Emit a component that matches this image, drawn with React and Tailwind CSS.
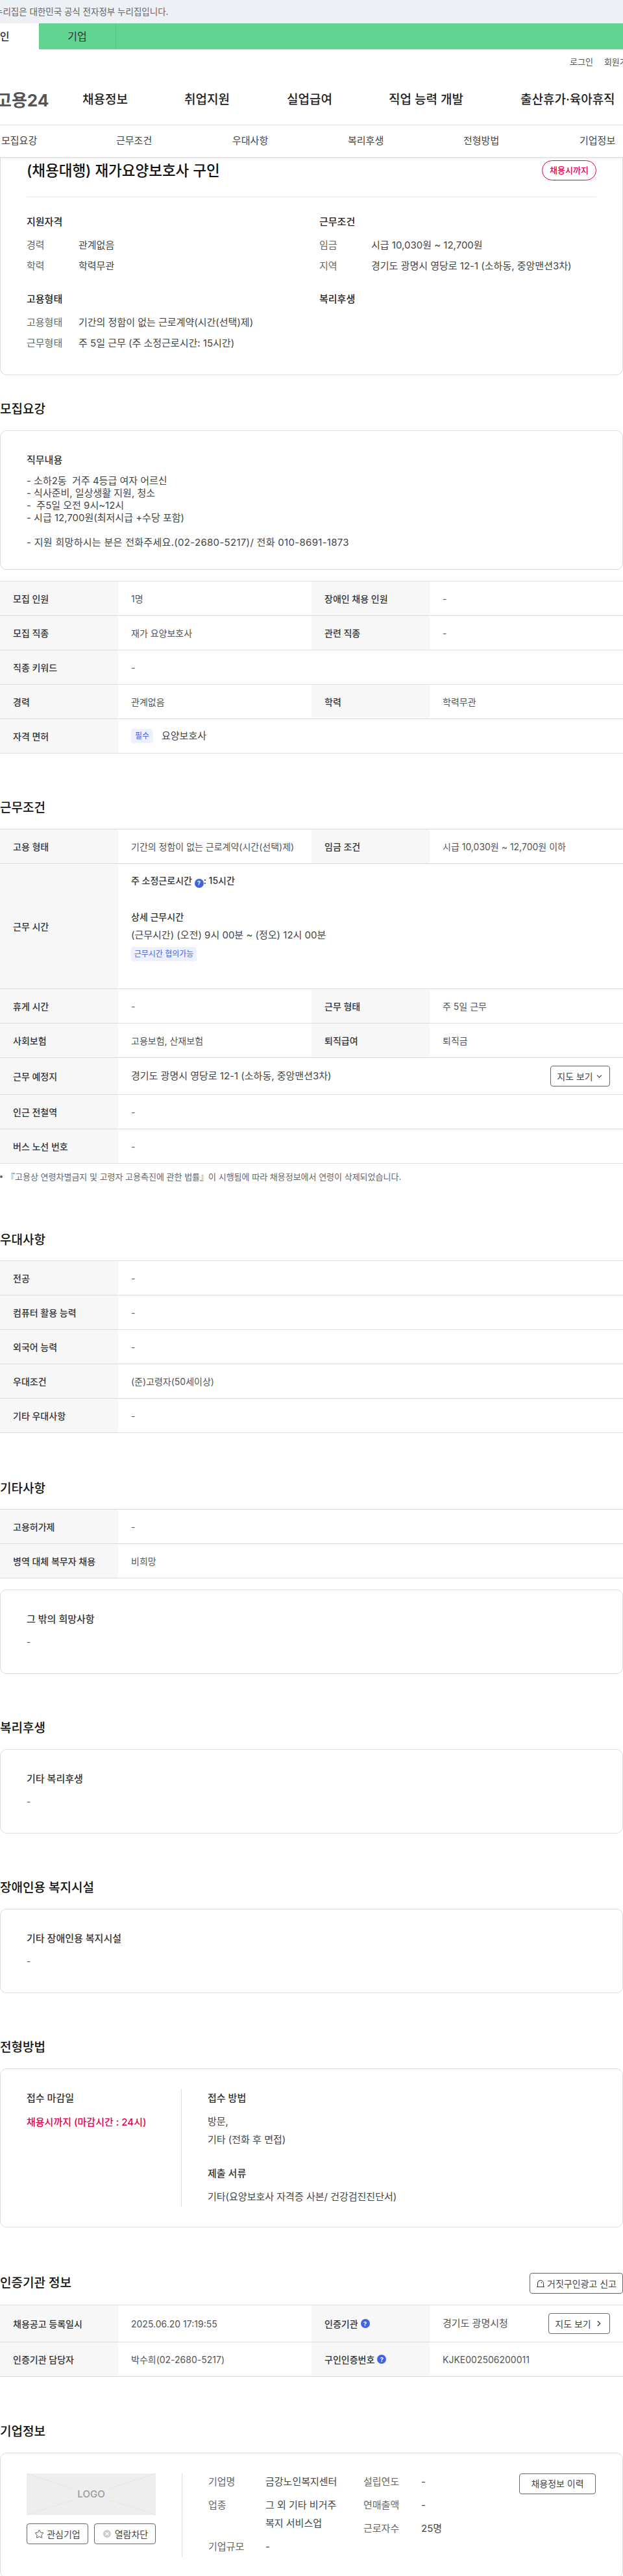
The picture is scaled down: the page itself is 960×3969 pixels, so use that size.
import { ChevronDown, ChevronRight, Star, CircleX } from "lucide-react";

const font = "font-['Inter','Noto_Sans_CJK_KR',sans-serif]";

function Help() {
  return (
    <span className="inline-flex h-[14px] w-[14px] items-center justify-center rounded-full bg-[#4263e0] align-[-2px] text-[9px] font-bold leading-none text-white">
      ?
    </span>
  );
}

function Heading({ children, className = "" }) {
  return <h2 className={`h-[28px] text-[19px] font-medium leading-[28px] text-[#111] ${className}`}>{children}</h2>;
}

function Label({ children }) {
  return (
    <div className="flex w-[182px] shrink-0 items-center bg-[#f7f7f7] pl-[20px] text-[14px] font-medium text-[#333]">
      {children}
    </div>
  );
}

function Value({ children, className = "" }) {
  return <div className={`flex min-w-0 flex-1 items-center pl-[20px] text-[14px] text-[#555] ${className}`}>{children}</div>;
}

// rows: [label, value, label2?, value2?, heightClass?]
function Table({ rows }) {
  return (
    <div className="border-t border-[#ddd]">
      {rows.map((r, i) => (
        <div key={i} className={`flex border-b border-[#ddd] ${r[4] || "h-[53px]"}`}>
          <Label>{r[0]}</Label>
          <Value className={r[2] ? "max-w-[298px]" : ""}>{r[1]}</Value>
          {r[2] && <Label>{r[2]}</Label>}
          {r[2] && <Value>{r[3]}</Value>}
        </div>
      ))}
    </div>
  );
}

function NoteCard({ title, className = "" }) {
  return (
    <div className={`h-[130px] rounded-[10px] border border-[#ddd] px-[40px] pt-[35px] ${className}`}>
      <div className="text-[15px] font-medium leading-[20px] text-[#333]">{title}</div>
      <div className="mt-[15px] text-[14px] leading-[20px] text-[#555]">-</div>
    </div>
  );
}

function Info({ label, children }) {
  return (
    <div className="flex h-[20px] items-center text-[15px] leading-[20px]">
      <span className="w-[80px] shrink-0 text-[#666]">{label}</span>
      <span className="whitespace-nowrap text-[#444]">{children}</span>
    </div>
  );
}

function Summary() {
  return (
    <div className="h-[336px] rounded-b-[10px] border border-t-0 border-[#ddd] px-[40px] pt-[5px]">
      <div className="flex h-[31px] items-center justify-between">
        <h1 className="text-[22.5px] font-medium leading-[31px] text-[#111]">(채용대행) 재가요양보호사 구인</h1>
        <span className="flex h-[31px] w-[84px] items-center justify-center rounded-full border border-[#e6004d] text-[13px] font-medium text-[#e6004d]">
          채용시까지
        </span>
      </div>
      <div className="mt-[25px] border-t border-[#e5e5e5]" />
      <div className="mt-[28px] grid grid-cols-[451px_1fr]">
        <div>
          <div className="text-[15px] font-medium leading-[20px] text-[#222]">지원자격</div>
          <div className="mt-[16px] flex flex-col gap-[12px]">
            <Info label="경력">관계없음</Info>
            <Info label="학력">학력무관</Info>
          </div>
        </div>
        <div>
          <div className="text-[15px] font-medium leading-[20px] text-[#222]">근무조건</div>
          <div className="mt-[16px] flex flex-col gap-[12px]">
            <Info label="임금">시급 10,030원 ~ 12,700원</Info>
            <Info label="지역">경기도 광명시 영당로 12-1 (소하동, 중앙맨션3차)</Info>
          </div>
        </div>
        <div className="mt-[31px]">
          <div className="text-[15px] font-medium leading-[20px] text-[#222]">고용형태</div>
          <div className="mt-[16px] flex flex-col gap-[12px]">
            <Info label="고용형태">기간의 정함이 없는 근로계약(시간(선택)제)</Info>
            <Info label="근무형태">주 5일 근무 (주 소정근로시간: 15시간)</Info>
          </div>
        </div>
        <div className="mt-[31px]">
          <div className="text-[15px] font-medium leading-[20px] text-[#222]">복리후생</div>
        </div>
      </div>
    </div>
  );
}

function Header() {
  return (
    <>
      <div className="flex h-[36px] items-center overflow-hidden bg-[#edf0f5] text-[13.5px] text-[#666]">
        <span className="-ml-[8px] whitespace-nowrap">누리집은 대한민국 공식 전자정부 누리집입니다.</span>
      </div>
      <div className="flex h-[40px] bg-[#62d492] text-[16px] text-[#333]">
        <div className="flex w-[60px] items-center overflow-hidden bg-white">
          <span className="-ml-[15px] whitespace-nowrap font-medium">개인</span>
        </div>
        <div className="flex w-[119px] items-center justify-center border-r border-[#57c585]">기업</div>
      </div>
      <div className="flex h-[40px] items-center gap-[17px] pl-[878px] text-[13px] whitespace-nowrap text-[#555]">
        <span>로그인</span>
        <span>회원가입</span>
      </div>
      <div className="flex h-[77px] items-center border-b border-[#e5e5e5] text-[19px] font-medium whitespace-nowrap text-[#222]">
        <span className="-ml-[6px] w-[133px] text-[26px] font-bold text-[#555]">고용24</span>
        <span className="w-[157px]">채용정보</span>
        <span className="w-[158px]">취업지원</span>
        <span className="w-[157px]">실업급여</span>
        <span className="w-[203px]">직업 능력 개발</span>
        <span>출산휴가·육아휴직</span>
      </div>
      <div className="relative z-10 flex h-[49px] items-center pl-[2px] text-[15px] whitespace-nowrap text-[#444] shadow-[0_1px_3px_rgba(0,0,0,0.2)]">
        <span className="w-[177px]">모집요강</span>
        <span className="w-[179px]">근무조건</span>
        <span className="w-[178px]">우대사항</span>
        <span className="w-[178px]">복리후생</span>
        <span className="w-[179px]">전형방법</span>
        <span>기업정보</span>
      </div>
    </>
  );
}

function Recruit() {
  return (
    <section className="pt-[39px]">
      <Heading className="mb-[18px]">모집요강</Heading>
      <div className="h-[215px] rounded-[10px] border border-[#ddd] px-[40px] pt-[35px]">
        <div className="text-[15px] font-medium leading-[20px] text-[#333]">직무내용</div>
        <div className="mt-[12px] text-[15px] leading-[19px] whitespace-pre text-[#444]">
          {"- 소하2동  거주 4등급 여자 어르신\n- 식사준비, 일상생활 지원, 청소\n-  주5일 오전 9시~12시\n- 시급 12,700원(최저시급 +수당 포함)\n\n"}
          <span className="tracking-[0.3px]">- 지원 희망하시는 분은 전화주세요.(02-2680-5217)/ 전화 010-8691-1873</span>
        </div>
      </div>
      <div className="mt-[17px]">
        <Table
          rows={[
            ["모집 인원", "1명", "장애인 채용 인원", "-"],
            ["모집 직종", "재가 요양보호사", "관련 직종", "-"],
            ["직종 키워드", "-"],
            ["경력", "관계없음", "학력", "학력무관"],
            [
              "자격 면허",
              <>
                <span className="mr-[13px] flex h-[22px] w-[34px] items-center justify-center rounded-[4px] bg-[#eef1fd] text-[12px] text-[#4263e0]">
                  필수
                </span>
                <span className="text-[15px] text-[#444]">요양보호사</span>
              </>,
            ],
          ]}
        />
      </div>
    </section>
  );
}

function WorkHours() {
  return (
    <div className="self-start pt-[16px]">
      <div className="text-[14px] font-medium leading-[20px] text-[#333]">
        주 소정근로시간 <Help />: 15시간
      </div>
      <div className="mt-[35px] text-[14px] font-medium leading-[20px] text-[#333]">상세 근무시간</div>
      <div className="mt-[8px] text-[15px] leading-[20px] text-[#444]">(근무시간) (오전) 9시 00분 ~ (정오) 12시 00분</div>
      <div className="mt-[8px] inline-flex h-[22px] w-[101px] items-center justify-center rounded-[4px] bg-[#eef1fd] text-[12px] whitespace-nowrap text-[#4263e0]">
        근무시간 협의가능
      </div>
    </div>
  );
}

function Conditions() {
  return (
    <section className="pt-[70px]">
      <Heading className="mb-[18px]">근무조건</Heading>
      <Table
        rows={[
          ["고용 형태", "기간의 정함이 없는 근로계약(시간(선택)제)", "임금 조건", "시급 10,030원 ~ 12,700원 이하"],
          ["근무 시간", <WorkHours />, null, null, "h-[193px]"],
          ["휴게 시간", "-", "근무 형태", "주 5일 근무"],
          ["사회보험", "고용보험, 산재보험", "퇴직급여", "퇴직금"],
          [
            "근무 예정지",
            <>
              <span className="text-[15px] text-[#444]">경기도 광명시 영당로 12-1 (소하동, 중앙맨션3차)</span>
              <button className="mr-[20px] ml-auto flex h-[32px] w-[92px] items-center justify-center gap-[3px] rounded-[4px] border border-[#666] text-[14px] text-[#444]">
                지도 보기 <ChevronDown size={13} />
              </button>
            </>,
            null,
            null,
            "h-[57px]",
          ],
          ["인근 전철역", "-"],
          ["버스 노선 번호", "-"],
        ]}
      />
      <p className="mt-[10px] flex items-center text-[13px] leading-[20px] text-[#666]">
        <span className="mr-[6px] h-[4px] w-[4px] shrink-0 rounded-full bg-[#666]" />
        『고용상 연령차별금지 및 고령자 고용촉진에 관한 법률』이 시행됨에 따라 채용정보에서 연령이 삭제되었습니다.
      </p>
    </section>
  );
}

function Company() {
  return (
    <div className="flex h-[193px] rounded-[10px] border border-[#ddd] pt-[31px] pl-[40px]">
      <div className="w-[199px] shrink-0">
        <div className="flex h-[64px] items-center justify-center bg-[#eee] bg-[linear-gradient(to_top_right,transparent_49.6%,#ddd_50%,transparent_50.4%),linear-gradient(to_bottom_right,transparent_49.6%,#ddd_50%,transparent_50.4%)]">
          <span className="bg-[#eee] px-[6px] text-[15px] font-medium leading-[40px] text-[#999]">LOGO</span>
        </div>
        <div className="mt-[13px] flex justify-between">
          <button className="flex h-[32px] w-[95px] items-center justify-center gap-[4px] rounded-[4px] border border-[#666] text-[14px] text-[#444]">
            <Star size={15} strokeWidth={1.5} /> 관심기업
          </button>
          <button className="flex h-[32px] w-[95px] items-center justify-center gap-[4px] rounded-[4px] border border-[#666] text-[14px] text-[#444]">
            <CircleX size={16} className="fill-[#ccc] text-white" /> 열람차단
          </button>
        </div>
      </div>
      <div className="ml-[40px] flex h-[129px] flex-1 border-l border-[#ddd] pl-[40px] text-[15px] leading-[20px] whitespace-nowrap">
        <div className="w-[239px]">
          <div className="flex pt-[3px]">
            <span className="w-[88px] text-[#666]">기업명</span>
            <span className="text-[#444]">금강노인복지센터</span>
          </div>
          <div className="mt-[16px] flex">
            <span className="w-[88px] text-[#666]">업종</span>
            <span className="-mt-[4px] leading-[28px] text-[#444]">
              그 외 기타 비거주
              <br />
              복지 서비스업
            </span>
          </div>
          <div className="mt-[12px] flex">
            <span className="w-[88px] text-[#666]">기업규모</span>
            <span className="text-[#444]">-</span>
          </div>
        </div>
        <div className="w-[240px]">
          <div className="flex pt-[3px]">
            <span className="w-[89px] text-[#666]">설립연도</span>
            <span className="text-[#444]">-</span>
          </div>
          <div className="mt-[16px] flex">
            <span className="w-[89px] text-[#666]">연매출액</span>
            <span className="text-[#444]">-</span>
          </div>
          <div className="mt-[16px] flex">
            <span className="w-[89px] text-[#666]">근로자수</span>
            <span className="text-[#444]">25명</span>
          </div>
        </div>
        <button className="h-[32px] w-[118px] rounded-[4px] border border-[#666] text-[14px] text-[#444]">채용정보 이력</button>
      </div>
    </div>
  );
}

export default function App() {
  return (
    <div className={`${font} h-[3969px] w-[960px] overflow-hidden bg-white`}>
      <Header />
      <Summary />
      <Recruit />
      <Conditions />

      <section className="pt-[74px]">
        <Heading className="mb-[17px]">우대사항</Heading>
        <Table
          rows={[
            ["전공", "-"],
            ["컴퓨터 활용 능력", "-"],
            ["외국어 능력", "-"],
            ["우대조건", "(준)고령자(50세이상)"],
            ["기타 우대사항", "-"],
          ]}
        />
      </section>

      <section className="pt-[72px]">
        <Heading className="mb-[17px]">기타사항</Heading>
        <Table
          rows={[
            ["고용허가제", "-"],
            ["병역 대체 복무자 채용", "비희망"],
          ]}
        />
        <NoteCard title="그 밖의 희망사항" className="mt-[17px]" />
      </section>

      <section className="pt-[70px]">
        <Heading className="mb-[18px]">복리후생</Heading>
        <NoteCard title="기타 복리후생" />
      </section>

      <section className="pt-[70px]">
        <Heading className="mb-[18px]">장애인용 복지시설</Heading>
        <NoteCard title="기타 장애인용 복지시설" />
      </section>

      <section className="pt-[70px]">
        <Heading className="mb-[18px]">전형방법</Heading>
        <div className="flex h-[245px] rounded-[10px] border border-[#ddd] pt-[31px] pl-[40px]">
          <div className="h-[181px] w-[239px] shrink-0 border-r border-[#ddd] pt-[4px]">
            <div className="text-[15px] font-medium leading-[20px] text-[#333]">접수 마감일</div>
            <div className="mt-[17px] text-[15px] font-medium leading-[20px] text-[#e6004d]">채용시까지 (마감시간 : 24시)</div>
          </div>
          <div className="pt-[4px] pl-[40px] text-[15px]">
            <div className="font-medium leading-[20px] text-[#333]">접수 방법</div>
            <div className="mt-[12px] leading-[28px] text-[#444]">
              방문,
              <br />
              기타 (전화 후 면접)
            </div>
            <div className="mt-[28px] font-medium leading-[20px] text-[#333]">제출 서류</div>
            <div className="mt-[12px] leading-[28px] text-[#444]">기타(요양보호사 자격증 사본/ 건강검진진단서)</div>
          </div>
        </div>
      </section>

      <section className="pt-[70px]">
        <div className="mb-[17px] flex h-[32px] items-center justify-between">
          <Heading>인증기관 정보</Heading>
          <button className="flex h-[32px] w-[144px] items-center justify-center gap-[3px] rounded-[4px] border border-[#666] text-[14px] text-[#444]">
            <svg width="14" height="14" viewBox="0 0 14 14" fill="none" stroke="currentColor" strokeWidth="1.1">
              <path d="M2.5 12.5V7a4.5 4.5 0 0 1 9 0v5.5M1 12.5h12M8.5 5v2" />
            </svg>
            거짓구인광고 신고
          </button>
        </div>
        <Table
          rows={[
            [
              "채용공고 등록일시",
              "2025.06.20 17:19:55",
              <>
                인증기관<span className="ml-[4px] inline-flex"><Help /></span>
              </>,
              <>
                <span className="text-[15px]">경기도 광명시청</span>
                <button className="mr-[20px] ml-auto flex h-[32px] w-[95px] items-center justify-center gap-[5px] rounded-[4px] border border-[#666] text-[14px] text-[#444]">
                  지도 보기 <ChevronRight size={14} strokeWidth={2.5} />
                </button>
              </>,
              "h-[57px]",
            ],
            [
              "인증기관 담당자",
              "박수희(02-2680-5217)",
              <>
                구인인증번호<span className="ml-[4px] inline-flex"><Help /></span>
              </>,
              "KJKE002506200011",
            ],
          ]}
        />
      </section>

      <section className="pt-[71px]">
        <Heading className="mb-[18px]">기업정보</Heading>
        <Company />
      </section>
    </div>
  );
}
